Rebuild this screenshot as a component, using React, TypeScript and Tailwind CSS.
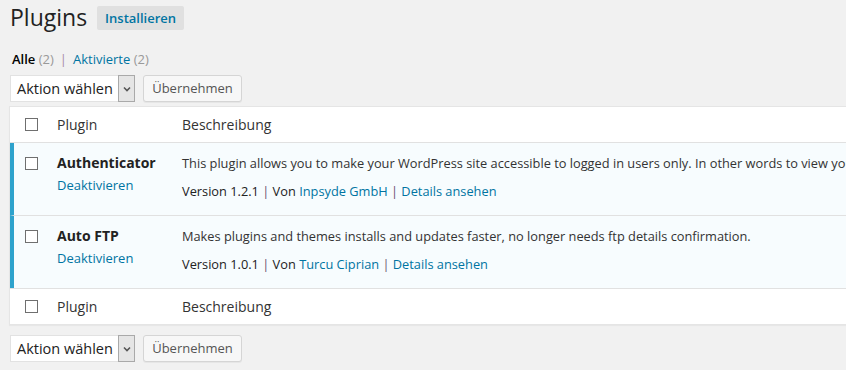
const font = { fontFamily: '"Open Sans", "Noto Sans", sans-serif' };

function Checkbox() {
  return <span className="block w-[13px] h-[13px] border border-[#6f6f6f] bg-white shrink-0" />;
}

function BulkActions() {
  return (
    <div className="flex items-center gap-2">
      <div className="flex h-[27px] w-[125px] bg-white border border-[#e2e2e2]">
        <span className="flex-1 pl-[6px] text-[14.5px] leading-[25px] text-[#222]">Aktion wählen</span>
        <span className="w-[17px] h-[27px] -mt-px -mr-px flex items-center justify-center bg-[#e5e5e5] border border-[#a9a9a9]">
          <svg width="8" height="6" viewBox="0 0 8 6">
            <path d="M1 1.5 L4 4.5 L7 1.5" fill="none" stroke="#555" strokeWidth="1.6" />
          </svg>
        </span>
      </div>
      <button className="h-[27px] w-[99px] rounded-[3px] border border-[#d5d5d5] bg-[#f7f7f7] text-[13px] text-[#555] shadow-[0_1px_0_#e6e6e6]">
        Übernehmen
      </button>
    </div>
  );
}

function HeadRow({ top }: { top?: boolean }) {
  return (
    <div className={`flex items-center h-[36px] border-[#e1e1e1] ${top ? 'border-b' : 'border-t'}`}>
      <div className="w-[47px] shrink-0 pl-[15px]">
        <Checkbox />
      </div>
      <div className="w-[125px] shrink-0 text-[14px] text-[#333]">Plugin</div>
      <div className="text-[14px] text-[#333]">Beschreibung</div>
    </div>
  );
}

const plugins = [
  {
    name: 'Authenticator',
    desc: 'This plugin allows you to make your WordPress site accessible to logged in users only. In other words to view your site they have to create or have an account.',
    version: '1.2.1',
    author: 'Inpsyde GmbH',
  },
  {
    name: 'Auto FTP',
    desc: 'Makes plugins and themes installs and updates faster, no longer needs ftp details confirmation.',
    version: '1.0.1',
    author: 'Turcu Ciprian',
  },
];

export default function App() {
  return (
    <div className="w-[846px] h-[370px] overflow-hidden bg-[#f1f1f1] pl-[10px]" style={font}>
      <div className="flex items-center gap-[10px] pt-[4px] h-[31px]">
        <h2 className="text-[23px] text-[#222] leading-[27px]">Plugins</h2>
        <span className="h-[24px] px-[8px] rounded-[2px] bg-[#e0e0e0] text-[13px] font-semibold text-[#0074a2] leading-[24px]">
          Installieren
        </span>
      </div>

      <div className="mt-[19px] text-[13px] leading-[18px] pl-[2px] text-[#666]">
        <span className="font-semibold text-black">Alle</span> <span className="text-[#999]">(2)</span>
        <span className="text-[#a58ba6] mx-[6px]">|</span>
        <span className="text-[#0074a2]">Aktivierte</span> <span className="text-[#999]">(2)</span>
      </div>

      <div className="mt-[7px]">
        <BulkActions />
      </div>

      <div className="mt-[4px] w-[1100px] bg-white border border-[#e5e5e5] -ml-px shadow-[0_1px_1px_rgba(0,0,0,0.04)]">
        <HeadRow top />
        {plugins.map((p, i) => (
          <div
            key={p.name}
            className={`flex bg-[#f7fcfe] border-l-4 border-[#2ea2cc] h-[72px] ${i > 0 ? 'border-t border-t-[#e1e1e1] h-[73px]' : ''}`}
          >
            <div className="w-[43px] shrink-0 pl-[11px] pt-[14px]">
              <Checkbox />
            </div>
            <div className="w-[125px] shrink-0 pt-[10px]">
              <div className="text-[14px] font-bold text-[#222] leading-[20px]">{p.name}</div>
              <div className="mt-[3px] text-[13px] text-[#0074a2] leading-[18px]">Deaktivieren</div>
            </div>
            <div className="pt-[11px] text-[12.8px] text-[#333] whitespace-nowrap">
              <div className="leading-[18px]">{p.desc}</div>
              <div className="mt-[10px] leading-[18px] text-[#222]">
                Version {p.version} <span className="text-[#6c4f6f]">|</span> Von{' '}
                <span className="text-[#0074a2]">{p.author}</span> <span className="text-[#6c4f6f]">|</span>{' '}
                <span className="text-[#0074a2]">Details ansehen</span>
              </div>
            </div>
          </div>
        ))}
        <HeadRow />
      </div>

      <div className="mt-[10px]">
        <BulkActions />
      </div>
    </div>
  );
}
